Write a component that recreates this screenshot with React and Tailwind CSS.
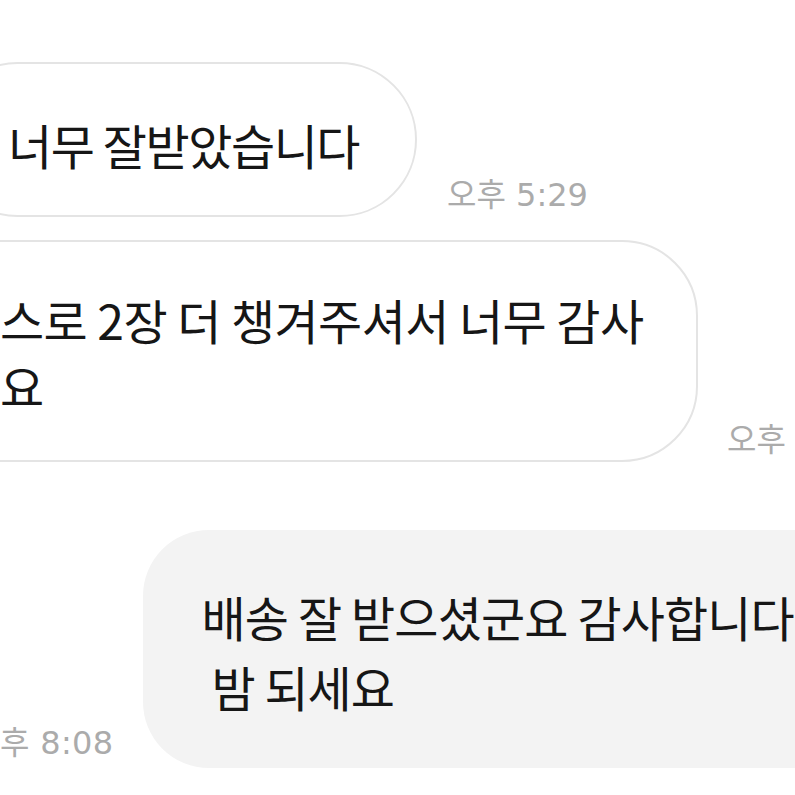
export default function App() {
  const font = { fontFamily: '"Noto Sans CJK KR", "Noto Sans", sans-serif' };
  const timeFont = { fontFamily: '"DejaVu Sans", "Noto Sans CJK KR", sans-serif' };
  return (
    <div className="w-[795px] h-[795px] overflow-hidden bg-white text-[#161616]" style={font}>
      <div className="flex items-end mt-[62px]">
        <div className="ml-[-60px] w-[477px] h-[155px] shrink-0 border-2 border-[#e4e4e4] rounded-[78px] flex items-center pl-[66px] pt-[8px]">
          <span className="text-[48px] leading-none tracking-[-0.03em] whitespace-nowrap">너무 잘받았습니다</span>
        </div>
        <div className="ml-[30px] mb-[6px] text-[32px] leading-none text-[#ababab] whitespace-nowrap" style={timeFont}>오후 5:29</div>
      </div>

      <div className="flex items-end mt-[23px]">
        <div className="ml-[-80px] w-[778px] h-[222px] shrink-0 border-2 border-[#e4e4e4] rounded-[76px] flex flex-col justify-center pl-[78px] pt-[2px]">
          <div className="text-[48px] leading-[66px] tracking-[-0.012em] whitespace-nowrap">스로 2장 더 챙겨주셔서 너무 감사</div>
          <div className="text-[48px] leading-[66px] tracking-[-0.03em] whitespace-nowrap">요</div>
        </div>
        <div className="ml-[29px] mb-[6px] text-[32px] leading-none text-[#ababab] whitespace-nowrap" style={timeFont}>오후</div>
      </div>

      <div className="flex items-end mt-[68px]">
        <div className="mb-[9px] shrink-0 text-[32px] leading-none tracking-[0.01em] text-[#ababab] whitespace-nowrap" style={timeFont}>후 8:08</div>
        <div className="ml-[30px] w-[700px] h-[238px] shrink-0 bg-[#f3f3f3] rounded-l-[66px] flex flex-col justify-center pl-[58px] pt-[4px]">
          <div className="text-[48px] leading-[70px] tracking-[-0.018em] whitespace-nowrap">배송 잘 받으셨군요 감사합니다</div>
          <div className="text-[48px] leading-[70px] tracking-[-0.02em] whitespace-nowrap pl-[10px]">밤 되세요</div>
        </div>
      </div>
    </div>
  );
}
